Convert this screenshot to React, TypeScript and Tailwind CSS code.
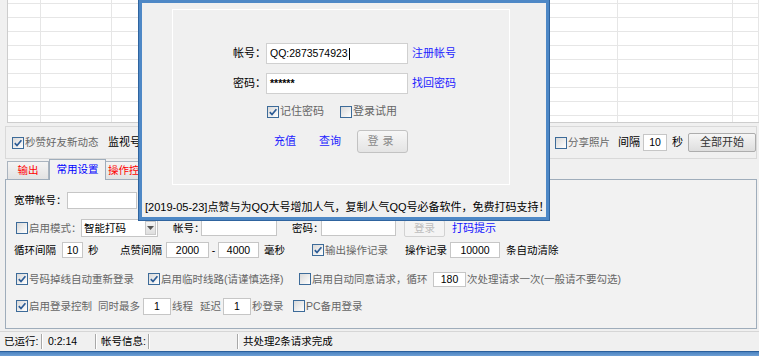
import React from "react";
import clsx from "clsx";

function Check({ checked = false }: { checked?: boolean }) {
  return (
    <span className="flex h-[12px] w-[12px] shrink-0 items-center justify-center border border-[#3d6b99] bg-linear-to-br from-[#d9d9d9] to-white">
      {checked && (
        <svg width="10" height="10" viewBox="0 0 10 10">
          <path d="M1.8 5.2 4 7.5 8.4 2.3" fill="none" stroke="#2c5c96" strokeWidth="1.7" />
        </svg>
      )}
    </span>
  );
}

function Field({ className, children }: { className?: string; children?: React.ReactNode }) {
  return (
    <span
      className={clsx(
        "flex shrink-0 items-center border border-[#c6c6c6] bg-white px-[3px] text-black",
        className
      )}
    >
      {children}
    </span>
  );
}

function Label({ className, children }: { className?: string; children: React.ReactNode }) {
  return <span className={clsx("shrink-0 whitespace-nowrap", className)}>{children}</span>;
}

const gridRows = [4, 14, 14, 14, 14, 14, 14, 14, 14, 14];

export default function App() {
  return (
    <div className="relative h-[356px] w-[759px] overflow-hidden bg-[#f0f0f0] font-['Liberation_Sans','Noto_Sans_CJK_SC',sans-serif] text-[10.5px] leading-none text-black">
      {/* list grid */}
      <div className="ml-[7px] h-[123px] overflow-hidden border-b border-l border-[#cdcdcd] bg-white">
        {gridRows.map((h, i) => (
          <div
            key={i}
            className={clsx(
              "grid grid-cols-[33px_71px_506px_115px_1fr]",
              h === 4 ? "h-[4px]" : "h-[14px]"
            )}
          >
            {[0, 1, 2, 3, 4].map((c) => (
              <div key={c} className="border-b border-r border-[#e6e6e6]" />
            ))}
          </div>
        ))}
      </div>

      {/* options row */}
      <div className="ml-[5px] mr-[2px] mt-[3px] flex h-[33px] items-center border border-[#d9d9d9] pl-[6px]">
        <Check checked />
        <Label className="w-[84px] pl-[1px] text-[#666]">秒赞好友新动态</Label>
        <Label className="text-[11px]">监视号</Label>
        <div className="ml-auto flex items-center">
          <Check />
          <Label className="w-[51px] pl-[1px] text-[#666]">分享照片</Label>
          <Label className="w-[25px] text-[11px]">间隔</Label>
          <Field className="h-[17px] w-[24px] justify-center">10</Field>
          <Label className="ml-[5px] w-[16px] text-[11px]">秒</Label>
          <button className="flex h-[19px] w-[68px] items-center justify-center rounded-[2px] border border-[#adadad] bg-linear-to-b from-[#f6f6f6] to-[#dedede] text-[11px] text-[#333]">
            全部开始
          </button>
        </div>
      </div>

      {/* tabs */}
      <div className="ml-[7px] flex h-[20px] items-end">
        <div className="flex h-[18px] w-[42px] items-center justify-center border border-b-0 border-[#aab4bf] bg-linear-to-b from-[#f4f4f4] to-[#e2e2e2] text-[#ff0000]">
          输出
        </div>
        <div className="relative z-10 -mb-px flex h-[21px] w-[57px] items-center justify-center border border-b-0 border-[#9fadbb] bg-[#f2f2f2] pb-[2px] text-[#0000ff]">
          常用设置
        </div>
        <div className="flex h-[18px] w-[60px] items-center border border-b-0 border-l-0 border-[#aab4bf] bg-linear-to-b from-[#f4f4f4] to-[#e2e2e2] pl-[2px] text-[#ff0000]">
          操作控制
        </div>
      </div>

      {/* tab panel */}
      <div className="ml-[5px] mr-[2px] h-[150px] border border-[#9fadbb] bg-[#f2f2f2] pt-[10px]">
        <div className="flex h-[20px] items-center pl-[8px]">
          <Label className="w-[53px]">宽带帐号：</Label>
          <Field className="h-[17px] w-[70px]" />
        </div>

        <div className="mt-[8px] flex h-[20px] items-center pl-[10px]">
          <Check />
          <Label className="w-[53px] pl-[1px] text-[#666]">启用模式：</Label>
          <span className="flex h-[18px] w-[77px] shrink-0 items-center border border-[#c6c6c6] bg-white pl-[2px]">
            <span className="flex-1">智能打码</span>
            <span className="mr-[1px] flex h-[14px] w-[11px] items-center justify-center border border-[#c9c9c9] bg-linear-to-b from-[#f5f5f5] to-[#dedede]">
              <svg width="7" height="4" viewBox="0 0 7 4">
                <path d="M0 0h7L3.5 4z" fill="#555" />
              </svg>
            </span>
          </span>
          <Label className="ml-[15px] w-[28px]">帐号：</Label>
          <Field className="h-[16px] w-[76px]" />
          <Label className="ml-[15px] w-[29px]">密码：</Label>
          <Field className="h-[16px] w-[75px]" />
          <button className="ml-[8px] flex h-[17px] w-[41px] items-center justify-center rounded-[2px] border border-[#d2d2d2] bg-[#f4f4f4] text-[#bdbdbd]">
            登录
          </button>
          <Label className="ml-[7px] text-[11px] text-[#1414ff]">打码提示</Label>
        </div>

        <div className="mt-[2px] flex h-[20px] items-center pl-[8px]">
          <Label className="w-[48px]">循环间隔</Label>
          <Field className="h-[16px] w-[21px] justify-center">10</Field>
          <Label className="ml-[5px] w-[32px]">秒</Label>
          <Label className="w-[46px]">点赞间隔</Label>
          <Field className="h-[16px] w-[43px] justify-center">2000</Field>
          <Label className="w-[9px] text-center">-</Label>
          <Field className="h-[16px] w-[41px] justify-center">4000</Field>
          <Label className="ml-[5px] w-[48px]">毫秒</Label>
          <Check checked />
          <Label className="w-[81px] pl-[1px] text-[#666]">输出操作记录</Label>
          <Label className="w-[45px]">操作记录</Label>
          <Field className="h-[16px] w-[50px] justify-center">10000</Field>
          <Label className="ml-[6px]">条自动清除</Label>
        </div>

        <div className="mt-[9px] flex h-[20px] items-center pl-[10px] text-[#666]">
          <Check checked />
          <Label className="w-[120px] pl-[1px]">号码掉线自动重新登录</Label>
          <Check checked />
          <Label className="w-[139px] pl-[1px]">启用临时线路(请谨慎选择)</Label>
          <Check />
          <Label className="w-[122px] pl-[1px]">启用自动同意请求，循环</Label>
          <Field className="h-[15px] w-[33px] justify-center">180</Field>
          <Label className="ml-[1px]">次处理请求一次(一般请不要勾选)</Label>
        </div>

        <div className="mt-[7px] flex h-[20px] items-center pl-[10px] text-[#666]">
          <Check checked />
          <Label className="w-[70px] pl-[1px]">启用登录控制</Label>
          <Label className="w-[45px]">同时最多</Label>
          <Field className="h-[17px] w-[28px] justify-center">1</Field>
          <Label className="ml-[1px] w-[28px]">线程</Label>
          <Label className="w-[23px]">延迟</Label>
          <Field className="h-[17px] w-[28px] justify-center">1</Field>
          <Label className="ml-[1px] w-[41px]">秒登录</Label>
          <Check />
          <Label className="pl-[1px]">PC备用登录</Label>
        </div>
      </div>

      {/* status bar */}
      <div className="mt-[2px] flex h-[20px] items-center border-t border-[#d6d6d6]">
        <Label className="w-[41px] pl-[4px]">已运行:</Label>
        <span className="h-[15px] w-[2px] border-l border-r border-l-[#a8a8a8] border-r-white" />
        <Label className="w-[52px] pl-[5px]">0:2:14</Label>
        <span className="h-[15px] w-[2px] border-l border-r border-l-[#a8a8a8] border-r-white" />
        <Label className="w-[51px] pl-[4px]">帐号信息:</Label>
        <span className="h-[15px] w-[2px] border-l border-r border-l-[#a8a8a8] border-r-white" />
        <span className="w-[87px]" />
        <span className="h-[15px] w-[2px] border-l border-r border-l-[#a8a8a8] border-r-white" />
        <Label className="pl-[4px]">共处理2条请求完成</Label>
      </div>
      <div className="h-[5px] border-t border-[#2b5f9b] bg-linear-to-b from-[#4a82c0] to-[#6e9fd4]" />

      {/* login dialog */}
      <div className="absolute left-[139px] top-0 h-[220px] w-[410px] border-[3px] border-[#4e88c6] bg-[#f0f0f0] shadow-[0_0_0_1px_#2f649f]">
        <div className="ml-[30px] mt-[6px] h-[176px] w-[338px] border border-white pl-[60px] pt-[33px]">
          <div className="flex h-[21px] items-center">
            <Label className="w-[33px] text-[11px]">帐号：</Label>
            <Field className="h-[21px] w-[142px] border-[#d0d0d0] px-[2px]">
              QQ:2873574923<span className="ml-[1px] h-[12px] w-px bg-black" />
            </Field>
            <Label className="ml-[4px] text-[11px] text-[#1d1dff]">注册帐号</Label>
          </div>
          <div className="mt-[9px] flex h-[21px] items-center">
            <Label className="w-[33px] text-[11px]">密码：</Label>
            <Field className="h-[21px] w-[142px] border-[#d0d0d0] px-[2px] font-bold">******</Field>
            <Label className="ml-[4px] text-[11px] text-[#1d1dff]">找回密码</Label>
          </div>
          <div className="mt-[11px] flex h-[13px] items-center pl-[34px] text-[#666]">
            <Check checked />
            <Label className="w-[61px] pl-[1px] text-[11px]">记住密码</Label>
            <Check />
            <Label className="pl-[1px] text-[11px]">登录试用</Label>
          </div>
          <div className="mt-[12px] flex h-[23px] items-center pl-[41px]">
            <Label className="w-[45px] text-[11px] text-[#1d1dff]">充值</Label>
            <Label className="w-[38px] text-[11px] text-[#1d1dff]">查询</Label>
            <button className="flex h-[23px] w-[51px] items-center justify-center rounded-[3px] border border-[#c2c2c2] bg-linear-to-b from-[#f7f7f7] to-[#e4e4e4] text-[11px] tracking-[4px] text-[#8a8a8a]">
              登录
            </button>
          </div>
        </div>
        <div className="mt-[17px] pl-[3px] text-[11px] whitespace-nowrap">
          [2019-05-23]点赞与为QQ大号增加人气，复制人气QQ号必备软件，免费打码支持！
        </div>
      </div>
    </div>
  );
}
